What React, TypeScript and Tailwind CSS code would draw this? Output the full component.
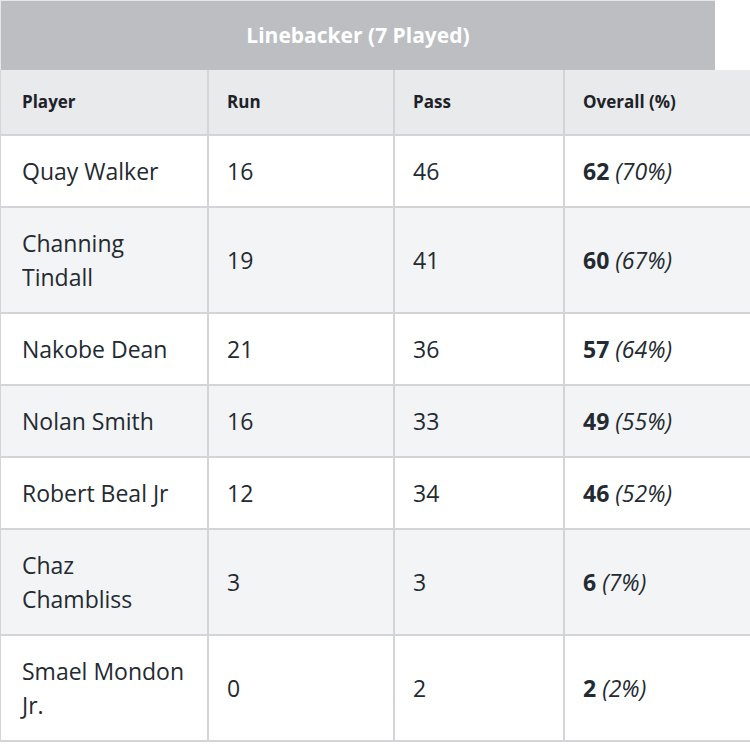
import * as React from 'react';

interface Row {
  name: string;
  run: number;
  pass: number;
  total: number;
  pct: string;
}

const ROWS: Row[] = [
  { name: 'Quay Walker', run: 16, pass: 46, total: 62, pct: '70%' },
  { name: 'Channing Tindall', run: 19, pass: 41, total: 60, pct: '67%' },
  { name: 'Nakobe Dean', run: 21, pass: 36, total: 57, pct: '64%' },
  { name: 'Nolan Smith', run: 16, pass: 33, total: 49, pct: '55%' },
  { name: 'Robert Beal Jr', run: 12, pass: 34, total: 46, pct: '52%' },
  { name: 'Chaz Chambliss', run: 3, pass: 3, total: 6, pct: '7%' },
  { name: 'Smael Mondon Jr.', run: 0, pass: 2, total: 2, pct: '2%' },
];

const cell =
  'border-[2px] border-[#d3d4d7] pl-[18px] pr-[20px] py-[18px] align-middle text-left';
const first = ' pl-[21px]';

export default function App() {
  return (
    <div
      className="w-[750px] bg-white text-[#232a31]"
      style={{ fontFamily: '"Open Sans", "Noto Sans", sans-serif' }}
    >
      {/* caption bar */}
      <div className="w-[715px] h-[70px] flex items-center justify-center bg-[#bdbec2] border-t border-l border-[#e6e7e9] text-white text-[21px] font-bold">
        Linebacker (7 Played)
      </div>

      <table className="w-[751px] border-collapse table-fixed -ml-[1px]">
        <colgroup>
          <col className="w-[208px]" />
          <col className="w-[186px]" />
          <col className="w-[170px]" />
          <col className="w-[187px]" />
        </colgroup>
        <thead>
          <tr className="bg-[#e9eaec] h-[65px] text-[17px] font-bold text-[#1d2228]">
            <th className={cell + first + ' border-t-0'}>Player</th>
            <th className={cell + ' border-t-0'}>Run</th>
            <th className={cell + ' border-t-0'}>Pass</th>
            <th className={cell + ' border-t-0'}>Overall (%)</th>
          </tr>
        </thead>
        <tbody className="text-[23px] leading-[34px]">
          {ROWS.map((r, i) => (
            <tr key={r.name} className={i % 2 === 1 ? 'bg-[#f3f4f6]' : 'bg-white'}>
              <td className={cell + first}>{r.name}</td>
              <td className={cell}>{r.run}</td>
              <td className={cell}>{r.pass}</td>
              <td className={cell}>
                <span className="font-bold">{r.total}</span>{' '}
                <span className="italic">({r.pct})</span>
              </td>
            </tr>
          ))}
        </tbody>
      </table>
    </div>
  );
}
